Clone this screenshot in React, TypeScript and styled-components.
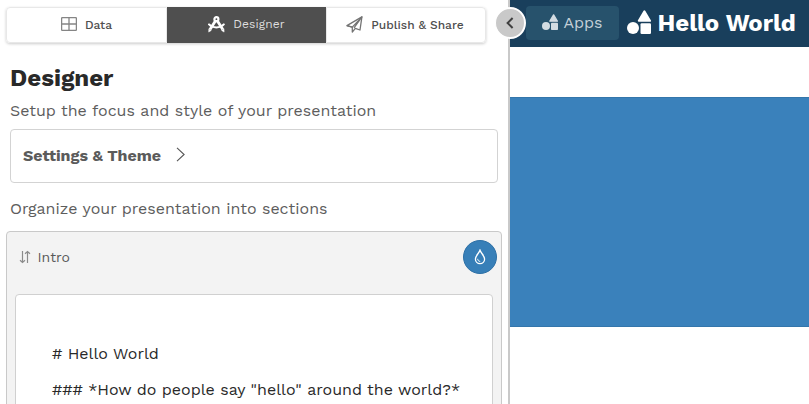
import React from 'react';
import styled, { createGlobalStyle, css } from 'styled-components';

const GlobalStyle = createGlobalStyle`
  * { box-sizing: border-box; }
  body {
    margin: 0;
    overflow: hidden;
    background: #fff;
    font-family: 'Work Sans', 'Open Sans', sans-serif;
    color: #595959;
    -webkit-font-smoothing: antialiased;
  }
  h1, h2, p { margin: 0; }
  button { font-family: inherit; border: 0; padding: 0; background: none; }
  svg { display: block; flex: none; }
`;

const Page = styled.div`
  position: relative;
  display: grid;
  grid-template-columns: 508px 1fr;
  height: 404px;
  overflow: hidden;
`;

const EditorPane = styled.section`
  overflow: hidden;
  padding: 7px 6px 0;
`;

const Tabs = styled.nav`
  display: flex;
  width: 480px;
  height: 36px;
  border-radius: 4px;
  box-shadow: 0 1px 3px rgba(0, 0, 0, 0.2);
`;

const Tab = styled.button<{ $active?: boolean }>`
  flex: 1;
  display: flex;
  align-items: center;
  justify-content: center;
  gap: 8px;
  padding-bottom: 2px;
  font-size: 12px;
  font-weight: 500;
  color: #4f4f4f;
  border: 1px solid #e8e8e8;
  background: #fff;
  &:first-child { border-radius: 4px 0 0 4px; flex: 0 0 161px; }
  &:last-child { border-radius: 0 4px 4px 0; padding-right: 2px; }
  ${(p) =>
    p.$active &&
    css`
      flex: 0 0 159px;
      font-weight: 400;
      letter-spacing: 0.1px;
      color: #dedede;
      background: #4f4f4f;
      border-color: #4f4f4f;
    `}
`;

const TabLabel = styled.span<{ $raise?: boolean }>`
  line-height: 16px;
  padding-top: ${(p) => (p.$raise ? 0 : '2px')};
`;

const Title = styled.h1`
  margin: 20px 0 0 4px;
  font-size: 24px;
  line-height: 30px;
  font-weight: 700;
  color: #292929;
`;

const Description = styled.p<{ $top: number }>`
  margin: ${(p) => p.$top}px 0 0 4px;
  font-size: 16px;
  line-height: 24px;
  color: #5d5d5d;
`;

const SettingsCard = styled.button`
  display: flex;
  align-items: center;
  gap: 14px;
  width: 488px;
  height: 54px;
  margin: 6px 0 0 4px;
  padding: 0 12px 2px;
  border: 1px solid #d3d3d3;
  border-radius: 4px;
  background: #fff;
  color: #5b5b5b;
  font-size: 16px;
  font-weight: 700;
  svg { margin-bottom: 1px; }
`;

const SectionPanel = styled.div`
  width: 496px;
  height: 220px;
  margin-top: 10px;
  padding: 0 8px;
  border: 1px solid #c9c9c9;
  border-radius: 4px;
  background: #f3f3f3;
`;

const SectionHeader = styled.header`
  display: flex;
  align-items: center;
  height: 62px;
  padding: 0 0 12px 4px;
  margin-right: -4px;
  gap: 6.5px;
`;

const SectionName = styled.span`
  flex: 1;
  font-size: 14px;
  line-height: 20px;
`;

const ThemeButton = styled.button`
  display: grid;
  place-items: center;
  width: 34px;
  height: 34px;
  border-radius: 50%;
  border: 1px solid #2d70a6;
  background: #377fb8;
  color: #fff;
`;

const Editor = styled.div`
  height: 180px;
  padding: 47px 36px;
  border: 1px solid #d0d0d0;
  border-radius: 4px 4px 0 0;
  background: #fff;
  color: #292929;
`;

const Line = styled.p`
  font-size: 16px;
  line-height: 24px;
  white-space: nowrap;
  & + & { margin-top: 12px; }
`;

const PreviewPane = styled.section`
  border-left: 2px solid #c9c9c9;
`;

const PreviewHeader = styled.header`
  display: flex;
  align-items: center;
  height: 47px;
  padding: 0 0 1px 16px;
  gap: 7px;
  background: #193f5c;
`;

const AppsButton = styled.button`
  display: flex;
  align-items: center;
  gap: 5.5px;
  width: 93px;
  height: 34px;
  padding: 0 0 2px 16px;
  border-radius: 4px;
  background: #27526c;
  color: #c4d0d8;
  font-size: 16px;
`;

const Brand = styled.h2`
  display: flex;
  align-items: center;
  gap: 6.5px;
  padding-left: 1px;
  font-size: 24px;
  line-height: 30px;
  font-weight: 700;
  color: #fff;
  white-space: nowrap;
  svg { margin-bottom: 2px; }
`;

const Hero = styled.div`
  height: 230px;
  margin-top: 50px;
  background: #3a81bb;
  border-top: 1px solid #3476ab;
  border-bottom: 1px solid #3476ab;
`;

const CollapseButton = styled.button`
  position: absolute;
  left: 495px;
  top: 7px;
  display: grid;
  place-items: center;
  width: 31px;
  height: 32px;
  border: 2px solid #fff;
  border-left-width: 1px;
  border-radius: 50%;
  background: #c9c9c9;
  color: #404040;
`;

const TableIcon = () => (
  <svg width="16" height="14" viewBox="0 0 16 14" fill="none" stroke="#858585" strokeWidth="1.3">
    <rect x="0.6" y="0.6" width="14.8" height="12.8" rx="1" />
    <path d="M8 .6v12.8M.6 7h14.8" />
  </svg>
);

const CompassIcon = () => (
  <svg width="17" height="17" viewBox="0 0 17 17" fill="none" stroke="#fff">
    <circle cx="8.4" cy="3.2" r="2" strokeWidth="2.2" />
    <path d="M7.2 5.2 2 13.6M9.6 5.2l5.2 8.4" strokeWidth="2.8" />
    <path d="M1 8.4c3.6 4 11.2 4 14.8 0" strokeWidth="2" strokeLinecap="round" />
    <path d="m.8 12.7-.1 3.4 2.7-1.7M13.4 14.4l2.7 1.7-.1-3.4" fill="#fff" strokeWidth=".5" />
  </svg>
);

const PlaneIcon = () => (
  <svg width="17" height="17" viewBox="0 0 17 17" fill="none" stroke="#747474" strokeWidth="1.3" strokeLinejoin="round">
    <path d="M.9 9.6 15.9.9 14 14l-4.7-1.7-3 3.8v-5z" />
    <path d="M.9 9.6 6.3 11.1 15.9.9 8 11.8" />
  </svg>
);

const ShapesIcon = ({ size, color }: { size: number; color: string }) => (
  <svg width={size} height={size} viewBox="0 0 24 24" fill={color}>
    <path d="M17.4 1.3 23 10.8H11.8z" stroke={color} strokeWidth="2" strokeLinejoin="round" />
    <circle cx="6" cy="18" r="6" />
    <rect x="13.5" y="13.3" width="10.5" height="10.7" rx="1.2" />
  </svg>
);

const SortIcon = () => (
  <svg width="12" height="14" viewBox="0 0 12 14" fill="none" stroke="#8b8b8b" strokeWidth="1.2">
    <path d="M3.5 1v11M1 10.3l2.5 2.2L6 10.3M8.5 13V2M6 3.7l2.5-2.2L11 3.7" />
  </svg>
);

const Chevron = () => (
  <svg width="12" height="15" viewBox="0 0 12 15" fill="none" stroke="#555" strokeWidth="1.1">
    <path d="m2 .8 7.1 6.7L2 14.2" />
  </svg>
);

const DropIcon = () => (
  <svg width="12" height="16" viewBox="0 0 12 16" fill="none" stroke="currentColor" strokeWidth="1.3">
    <path d="M6 1.2C5.2 4 1.4 6.8 1.4 10.1a4.6 4.6 0 0 0 9.2 0C10.6 6.8 6.8 4 6 1.2z" />
    <path d="M3.7 9.8c0 1.6.9 2.5 2.5 2.6" strokeWidth="1" />
  </svg>
);

const BackIcon = () => (
  <svg width="10" height="14" viewBox="0 0 10 14" fill="none" stroke="currentColor" strokeWidth="2">
    <path d="M7.6 2 2.6 7l5 5" />
  </svg>
);

export default function App() {
  return (
    <>
      <GlobalStyle />
      <Page>
        <EditorPane>
          <Tabs>
            <Tab><TableIcon /><TabLabel>Data</TabLabel></Tab>
            <Tab $active><CompassIcon /><TabLabel $raise>Designer</TabLabel></Tab>
            <Tab><PlaneIcon /><TabLabel>Publish &amp; Share</TabLabel></Tab>
          </Tabs>
          <Title>Designer</Title>
          <Description $top={6}>Setup the focus and style of your presentation</Description>
          <SettingsCard>Settings &amp; Theme<Chevron /></SettingsCard>
          <Description $top={14}>Organize your presentation into sections</Description>
          <SectionPanel>
            <SectionHeader>
              <SortIcon />
              <SectionName>Intro</SectionName>
              <ThemeButton aria-label="Theme"><DropIcon /></ThemeButton>
            </SectionHeader>
            <Editor>
              <Line># Hello World</Line>
              <Line>### *How do people say "hello" around the world?*</Line>
            </Editor>
          </SectionPanel>
        </EditorPane>
        <PreviewPane>
          <PreviewHeader>
            <AppsButton><ShapesIcon size={16} color="#d3dce2" />Apps</AppsButton>
            <Brand><ShapesIcon size={24} color="#fff" />Hello World</Brand>
          </PreviewHeader>
          <Hero />
        </PreviewPane>
        <CollapseButton aria-label="Collapse"><BackIcon /></CollapseButton>
      </Page>
    </>
  );
}
